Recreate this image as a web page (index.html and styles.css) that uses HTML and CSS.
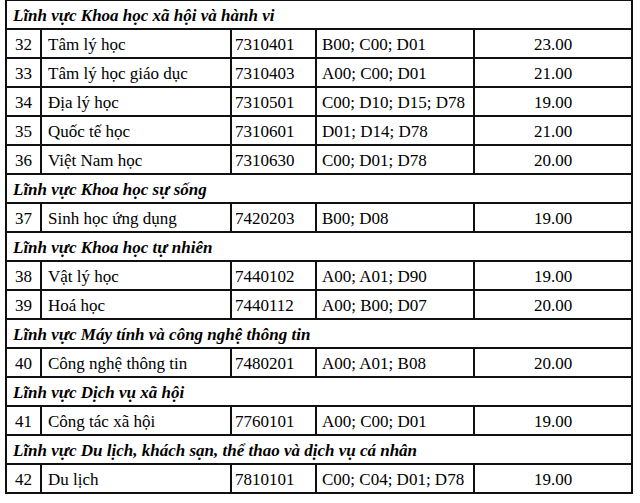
FILE: index.html
```html
<!DOCTYPE html>
<html>
<head>
<meta charset="utf-8">
<title>Điểm chuẩn</title>
<link rel="stylesheet" href="styles.css">
</head>
<body>
<table class="scores">
  <colgroup>
    <col class="c-no">
    <col class="c-name">
    <col class="c-code">
    <col class="c-combo">
    <col class="c-score">
  </colgroup>
  <tbody>
    <tr class="section"><td colspan="5">Lĩnh vực Khoa học xã hội và hành vi</td></tr>
    <tr><td class="no">32</td><td class="name">Tâm lý học</td><td class="code">7310401</td><td class="combo">B00; C00; D01</td><td class="score">23.00</td></tr>
    <tr><td class="no">33</td><td class="name">Tâm lý học giáo dục</td><td class="code">7310403</td><td class="combo">A00; C00; D01</td><td class="score">21.00</td></tr>
    <tr><td class="no">34</td><td class="name">Địa lý học</td><td class="code">7310501</td><td class="combo">C00; D10; D15; D78</td><td class="score">19.00</td></tr>
    <tr><td class="no">35</td><td class="name">Quốc tế học</td><td class="code">7310601</td><td class="combo">D01; D14; D78</td><td class="score">21.00</td></tr>
    <tr><td class="no">36</td><td class="name">Việt Nam học</td><td class="code">7310630</td><td class="combo">C00; D01; D78</td><td class="score">20.00</td></tr>
    <tr class="section"><td colspan="5">Lĩnh vực Khoa học sự sống</td></tr>
    <tr><td class="no">37</td><td class="name">Sinh học ứng dụng</td><td class="code">7420203</td><td class="combo">B00; D08</td><td class="score">19.00</td></tr>
    <tr class="section"><td colspan="5">Lĩnh vực Khoa học tự nhiên</td></tr>
    <tr><td class="no">38</td><td class="name">Vật lý học</td><td class="code">7440102</td><td class="combo">A00; A01; D90</td><td class="score">19.00</td></tr>
    <tr><td class="no">39</td><td class="name">Hoá học</td><td class="code">7440112</td><td class="combo">A00; B00; D07</td><td class="score">20.00</td></tr>
    <tr class="section"><td colspan="5">Lĩnh vực Máy tính và công nghệ thông tin</td></tr>
    <tr><td class="no">40</td><td class="name">Công nghệ thông tin</td><td class="code">7480201</td><td class="combo">A00; A01; B08</td><td class="score">20.00</td></tr>
    <tr class="section"><td colspan="5">Lĩnh vực Dịch vụ xã hội</td></tr>
    <tr><td class="no">41</td><td class="name">Công tác xã hội</td><td class="code">7760101</td><td class="combo">A00; C00; D01</td><td class="score">19.00</td></tr>
    <tr class="section"><td colspan="5">Lĩnh vực Du lịch, khách sạn, thể thao và dịch vụ cá nhân</td></tr>
    <tr><td class="no">42</td><td class="name">Du lịch</td><td class="code">7810101</td><td class="combo">C00; C04; D01; D78</td><td class="score">19.00</td></tr>
  </tbody>
</table>
</body>
</html>
```
FILE: styles.css
```css
html, body {
  margin: 0;
  padding: 0;
  background: #ffffff;
}

body {
  font-family: "Liberation Serif", "Times New Roman", serif;
  font-size: 17px;
  color: #000000;
}

.scores {
  border-collapse: collapse;
  table-layout: fixed;
  width: 628px;
  margin: -1px 0 0 5px;
}

.c-no { width: 35px; }
.c-name { width: 190px; }
.c-code { width: 85px; }
.c-combo { width: 158px; }
.c-score { width: 158px; }

.scores td {
  border: 2px solid #111111;
  height: 24px;
  line-height: 24px;
  padding: 3px 0 0 0;
  white-space: nowrap;
  vertical-align: top;
  font-size: 17px;
}

.scores .section td {
  font-weight: bold;
  font-style: italic;
  padding-left: 6px;
}

.no { text-align: center; }
.name { padding-left: 6px !important; }
.code { padding-left: 3px !important; }
.combo { padding-left: 5px !important; }
.score { text-align: center; }
```
